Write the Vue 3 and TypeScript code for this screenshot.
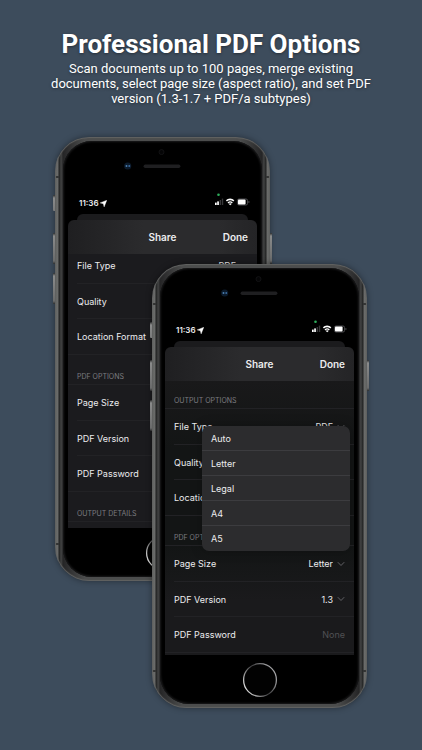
<script setup lang="ts">
interface Row {
  kind: 'picker' | 'password'
  label: string
  value?: string
}
interface Section {
  title: string
  rows: Row[]
}
interface Phone {
  id: string
  sections: Section[]
  menu: string[]
}

const outputRows: Row[] = [
  { kind: 'picker', label: 'File Type', value: 'PDF' },
  { kind: 'picker', label: 'Quality' },
  { kind: 'picker', label: 'Location Format' },
]
const pdfRows: Row[] = [
  { kind: 'picker', label: 'Page Size', value: 'Letter' },
  { kind: 'picker', label: 'PDF Version', value: '1.3' },
  { kind: 'password', label: 'PDF Password' },
]

const phones: Phone[] = [
  {
    id: 'back',
    sections: [
      { title: '', rows: outputRows },
      { title: 'PDF OPTIONS', rows: pdfRows },
      { title: 'OUTPUT DETAILS', rows: [] },
    ],
    menu: [],
  },
  {
    id: 'front',
    sections: [
      { title: 'OUTPUT OPTIONS', rows: outputRows },
      { title: 'PDF OPTIONS', rows: pdfRows },
    ],
    menu: ['Auto', 'Letter', 'Legal', 'A4', 'A5'],
  },
]

const fieldId = (phone: Phone, row: Row): string =>
  `${phone.id}-${row.label.toLowerCase().replace(/ /g, '-')}`
</script>

<template>
  <main class="poster">
    <header class="intro">
      <h1>Professional PDF Options</h1>
      <p>
        Scan documents up to 100 pages, merge existing documents, select page size (aspect ratio),
        and set PDF version (1.3-1.7 + PDF/a subtypes)
      </p>
    </header>

    <div class="stage">
      <section v-for="phone in phones" :key="phone.id" class="phone" :class="phone.id">
        <i class="key mute"></i>
        <i class="key volume-up"></i>
        <i class="key volume-down"></i>
        <i class="key power"></i>
        <div class="glass">
          <svg class="earpiece" viewBox="0 0 190 55" aria-hidden="true">
            <circle cx="94" cy="11" r="2.5" fill="#050506" stroke="#121214" />
            <circle cx="60" cy="25" r="3.6" fill="#0b1a2b" />
            <circle cx="58.8" cy="25" r="1" fill="#4c7fb0" />
            <circle cx="61.6" cy="25" r="1" fill="#3c6a9c" />
            <rect x="76" y="23.5" width="37" height="3.4" rx="1.7" fill="#1f1f21" />
          </svg>

          <div class="status">
            <span class="time">11:36</span>
            <svg class="arrow" viewBox="0 0 8 8" aria-hidden="true">
              <path d="M7.8.2 4.7 7.9 3.8 4.2.1 3.3Z" fill="#fff" stroke="#fff" stroke-width=".4" />
            </svg>
            <svg class="signals" viewBox="0 0 36 14" aria-hidden="true">
              <circle cx="4.5" cy="1.8" r="1.3" fill="#2fae5c" />
              <rect x="1" y="9.6" width="1.7" height="2.4" fill="#fff" />
              <rect x="3.2" y="8.4" width="1.7" height="3.6" fill="#fff" />
              <rect x="5.6" y="7" width="1.4" height="5" fill="#38383a" />
              <rect x="7.8" y="5.6" width="1.4" height="6.4" fill="#38383a" />
              <path d="M12.4 7.9a5.3 5.3 0 0 1 7.4 0" fill="none" stroke="#fff" stroke-width="1.6" />
              <path d="M14 9.9a3.1 3.1 0 0 1 4.3 0" fill="none" stroke="#fff" stroke-width="1.4" />
              <path d="M16.2 12.3 14.8 10.9a1.9 1.9 0 0 1 2.8 0Z" fill="#fff" />
              <rect x="23.4" y="6" width="10.2" height="6" rx="1.6" fill="none" stroke="#5c5c5f" stroke-width=".8" />
              <rect x="24" y="6.6" width="7.6" height="4.8" rx=".9" fill="#fff" />
              <path d="M34.6 8v2q.9-.3.9-1t-.9-1Z" fill="#77777a" />
            </svg>
          </div>

          <div class="under-sheet"></div>
          <div class="sheet">
            <div class="nav">
              <h2>Share</h2>
              <button type="button" class="done">Done</button>
            </div>
            <div class="list">
              <div class="scroller">
                <div v-for="section in phone.sections" :key="section.title" class="group">
                  <h3 v-if="section.title">{{ section.title }}</h3>
                  <div v-for="row in section.rows" :key="row.label" class="row">
                    <label :for="fieldId(phone, row)">{{ row.label }}</label>
                    <template v-if="row.kind === 'picker'">
                      <select :id="fieldId(phone, row)" class="picker">
                        <option v-if="row.value">{{ row.value }}</option>
                      </select>
                      <svg class="chevron" viewBox="0 0 8 6" aria-hidden="true">
                        <path d="M.8 1.2 4 4.5 7.2 1.2" fill="none" stroke="#626266" stroke-width="1" />
                      </svg>
                    </template>
                    <input
                      v-else
                      :id="fieldId(phone, row)"
                      type="password"
                      class="secret"
                      placeholder="None"
                    />
                  </div>
                </div>
              </div>
              <div v-if="phone.menu.length" class="menu" role="menu">
                <button v-for="size in phone.menu" :key="size" type="button" role="menuitem">
                  {{ size }}
                </button>
              </div>
            </div>
          </div>

          <svg class="home" viewBox="0 0 36 36" aria-hidden="true">
            <defs>
              <linearGradient :id="`ring-${phone.id}`" x1="0" y1=".8" x2="1" y2=".2">
                <stop offset="0" stop-color="#f4f4f4" />
                <stop offset=".2" stop-color="#a0a0a0" />
                <stop offset=".5" stop-color="#3c3c3e" />
                <stop offset=".8" stop-color="#8c8c8e" />
                <stop offset="1" stop-color="#b0b0b2" />
              </linearGradient>
            </defs>
            <circle cx="18" cy="18" r="16.4" fill="#020202" :stroke="`url(#ring-${phone.id})`" stroke-width="1.3" />
          </svg>
        </div>
      </section>
    </div>
  </main>
</template>

<style>
body {
  margin: 0;
  background: #3d4c5c;
}
</style>

<style scoped>
.poster {
  min-height: 100vh;
  box-sizing: border-box;
  padding: 28px 24px 40px;
  background: #3d4c5c;
  font-family: Inter, 'Liberation Sans', sans-serif;
  color: #ececee;
}
.intro {
  text-align: center;
  font-family: Roboto, 'Liberation Sans', sans-serif;
  color: #fff;
  text-shadow: 0 1px 3px rgba(0, 0, 0, 0.4);
}
h1,
h2,
h3,
p {
  margin: 0;
}
h1 {
  font-size: 26px;
  line-height: 33px;
  font-weight: 700;
}
.intro p {
  max-width: 330px;
  margin: 0 auto;
  font-size: 13px;
  line-height: 15px;
}
.stage {
  display: grid;
  width: max-content;
  margin: 31px auto 0;
}
.phone {
  position: relative;
  grid-area: 1 / 1;
  align-self: start;
  justify-self: start;
  box-sizing: border-box;
  width: 215px;
  padding: 4px 8px;
  border-radius: 34px;
  background:
    linear-gradient(#333434, #333434) 0 39px / 4px 2px no-repeat,
    linear-gradient(#333434, #333434) 100% 39px / 4px 2px no-repeat,
    linear-gradient(#333434, #333434) 0 406px / 4px 2px no-repeat,
    linear-gradient(#333434, #333434) 100% 406px / 4px 2px no-repeat,
    linear-gradient(
      90deg,
      #4d4e4e 0,
      #707170 2px,
      #636463 3px,
      #262727 4px,
      #2b2c2c 5px,
      #454646 6px,
      #252526 8px,
      #4c4d4d 30px,
      #4c4d4d calc(100% - 30px),
      #252526 calc(100% - 8px),
      #454646 calc(100% - 6px),
      #2b2c2c calc(100% - 5px),
      #262727 calc(100% - 4px),
      #636463 calc(100% - 3px),
      #707170 calc(100% - 2px),
      #4d4e4e 100%
    );
  box-shadow:
    inset 0 0 1px 1px #626362,
    0 0 6px rgba(0, 0, 0, 0.4);
}
.phone.front {
  margin: 127px 0 0 97px;
}
.key {
  position: absolute;
  left: -2px;
  width: 2px;
  height: 31px;
  border-radius: 1px 0 0 1px;
  background: linear-gradient(#2c2d2d, #8a8b8b 3px, #6a6b6b 28px, #2c2d2d);
}
.mute {
  top: 58px;
  height: 16px;
}
.volume-up {
  top: 96px;
}
.volume-down {
  top: 136px;
}
.power {
  top: 96px;
  right: -2px;
  left: auto;
}
.glass {
  display: flex;
  flex-direction: column;
  padding: 0 5px 6px;
  border-radius: 29px;
  background: #000;
  box-shadow: inset 0 0 2px 1px #1b1b1c;
}
.earpiece {
  display: block;
  width: 100%;
  height: 55px;
}
.status {
  display: flex;
  align-items: center;
  height: 14px;
  padding: 0 7px 0 11px;
}
.time {
  font-size: 8px;
  line-height: 14px;
  font-weight: 600;
}
.arrow {
  width: 7px;
  height: 7px;
  margin-left: 1px;
}
.signals {
  width: 36px;
  height: 14px;
  margin: -6px 0 0 auto;
}
.under-sheet {
  height: 6px;
  margin: 4px 9px 0;
  border-radius: 6px 6px 0 0;
  background: #1b1b1d;
}
.sheet {
  overflow: hidden;
  border-radius: 6px 6px 0 0;
}
.nav {
  display: grid;
  grid-template-columns: 1fr auto 1fr;
  align-items: center;
  height: 34px;
  padding: 0 9px;
  background: linear-gradient(90deg, #1f1f21, #2b2b2d 40%, #2b2b2d 80%, #242426);
}
.nav h2 {
  grid-column: 2;
  font-size: 10px;
  font-weight: 600;
}
button,
select,
input {
  margin: 0;
  padding: 0;
  border: 0;
  background: none;
  font: inherit;
  color: inherit;
}
.done {
  justify-self: end;
  font-size: 10px;
  font-weight: 600;
}
.list {
  position: relative;
}
.scroller {
  height: 274px;
  overflow: hidden;
  background: #1b1b1e;
}
.front .scroller {
  background: linear-gradient(#19191a, #131515 25%, #131515 60%, #1a1a1c 80%);
}
.group:first-child {
  margin-top: -6px;
}
.front .group:first-child {
  margin-top: -2px;
}
.group h3 {
  box-sizing: border-box;
  height: 30px;
  padding: 15px 9px 0;
  border-bottom: 1px solid #222225;
  font-size: 7px;
  line-height: 14px;
  font-weight: 400;
  color: #7c7c80;
}
.row {
  display: flex;
  align-items: center;
  box-sizing: border-box;
  height: 36px;
  margin-left: 9px;
  padding-right: 9px;
  border-bottom: 1px solid #222225;
  font-size: 9px;
}
.row:nth-of-type(2) {
  height: 35px;
}
.row:last-child {
  margin-left: 0;
  padding-left: 9px;
}
.row label {
  flex: none;
}
.picker {
  flex: 1;
  min-width: 0;
  appearance: none;
  text-align-last: right;
}
.chevron {
  flex: none;
  width: 8px;
  height: 6px;
  margin-left: 4px;
}
.secret {
  flex: 1;
  min-width: 0;
  text-align: right;
}
.secret::placeholder {
  color: #515154;
  opacity: 1;
}
.menu {
  position: absolute;
  top: 45px;
  right: 4px;
  left: 37px;
  overflow: hidden;
  border-radius: 7px;
  background: #2c2c2e;
  box-shadow: 0 0 12px rgba(0, 0, 0, 0.25);
}
.menu button {
  display: block;
  box-sizing: border-box;
  width: 100%;
  height: 25px;
  padding: 0 9px;
  border-bottom: 1px solid #3c3c3f;
  font-size: 9px;
  text-align: left;
}
.menu button:last-child {
  border-bottom: 0;
}
.home {
  align-self: center;
  width: 36px;
  height: 36px;
  margin-top: 7px;
}
</style>
